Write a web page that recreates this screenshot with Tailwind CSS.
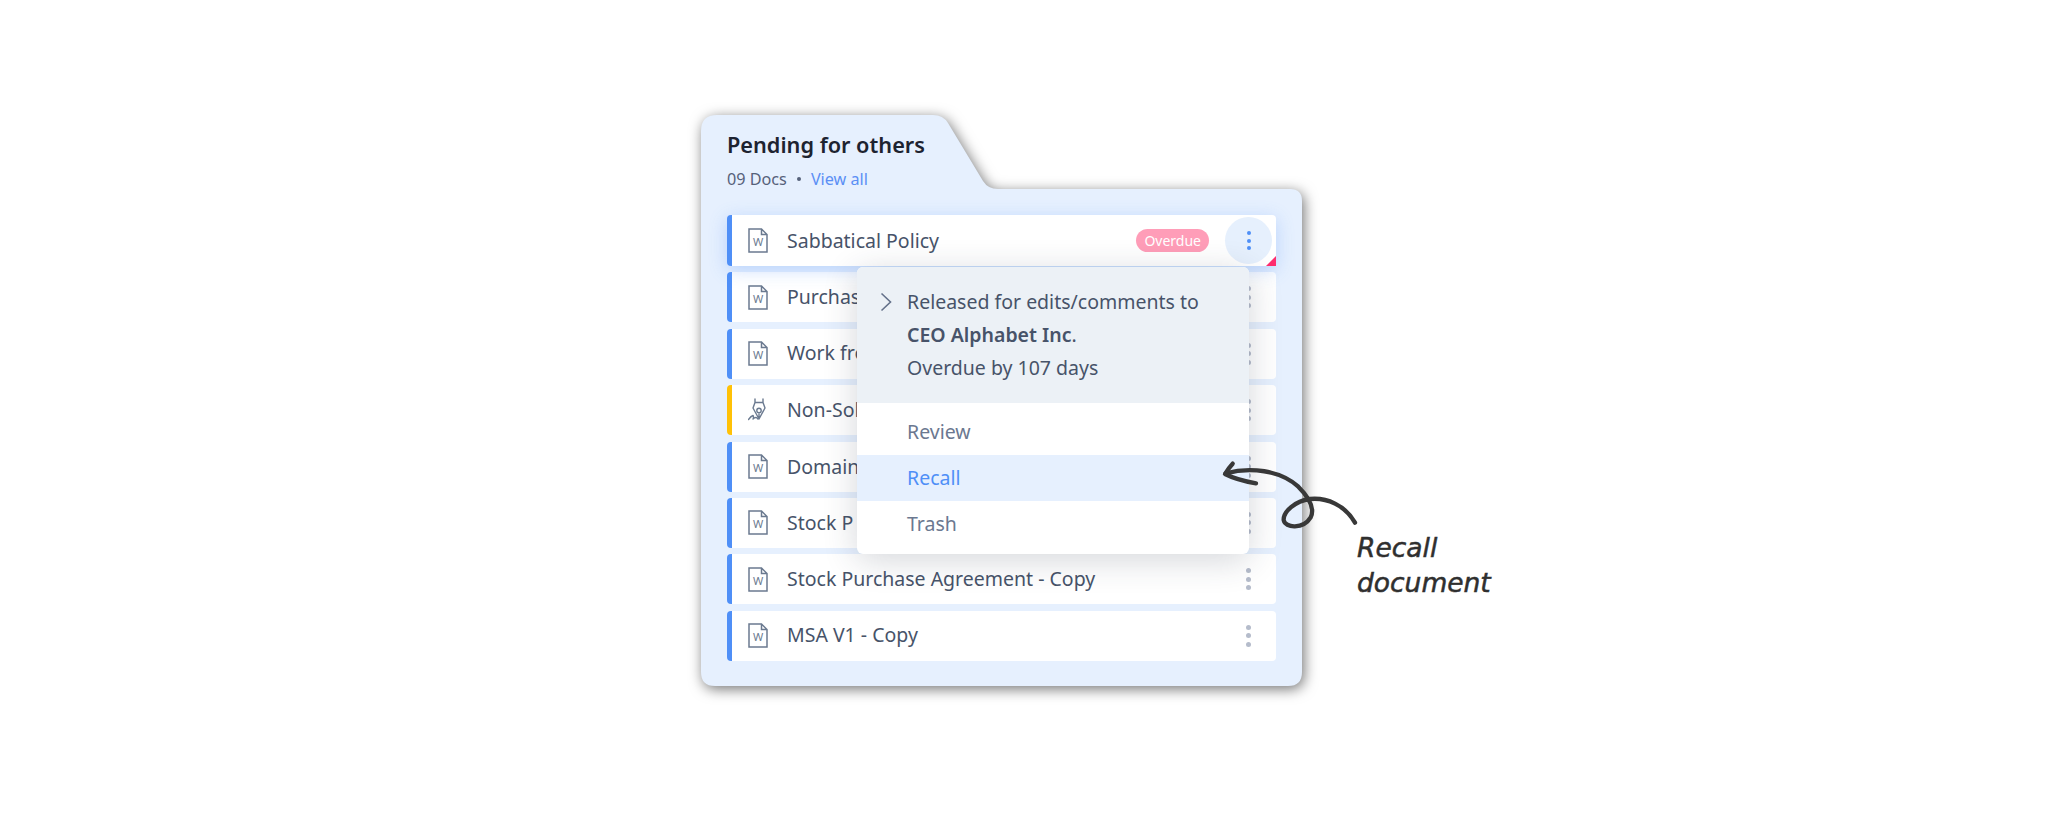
<!DOCTYPE html>
<html lang="en">
<head>
    <meta charset="UTF-8">
    <title>Pending for others</title>
    <script src="https://cdn.jsdelivr.net/npm/@tailwindcss/browser@4"></script>
</head>
<body class="bg-white h-[827px] overflow-hidden pl-[701px] pt-[115px] font-['Noto_Sans',sans-serif] text-[#475369]">

    <!-- folder panel -->
    <div class="relative w-[601px] h-[571px]">
        <svg class="absolute inset-0 overflow-visible drop-shadow-[2px_3px_7px_rgba(0,0,0,0.55)]" width="601" height="571" viewBox="0 0 601 571">
            <path fill="#e6f0fe" d="M16 0 H232 Q242 0 247 8 L282 66 Q287 74 297 74 H589 Q601 74 601 86 V557 Q601 571 587 571 H14 Q0 571 0 557 V16 Q0 0 16 0 Z"/>
        </svg>

        <div class="relative px-[26px] pt-[14px]">
            <h1 class="text-[21.7px] leading-[32px] font-semibold text-[#1d2330]">Pending for others</h1>
            <div class="flex items-center mt-[6px] text-[16.2px] leading-[24px]">
                <span class="text-[#56617a]">09 Docs</span>
                <span class="w-[4px] h-[4px] rounded-full bg-[#56617a] mx-[10px]"></span>
                <a class="text-[#5b8ff5]">View all</a>
            </div>

            <!-- rows -->
            <div class="flex flex-col gap-[6.4px] mt-[24px] w-[549px] text-[19.5px]">
                <div class="relative h-[51px] bg-white rounded-[4px] border-l-[5px] border-[#4f8ff7] flex items-center pl-[16px] shadow-[0_4px_18px_rgba(79,143,247,0.3)]">
                    <svg class="w-[20px] h-[25px] mr-[19px]" viewBox="0 0 20 25"><path fill="none" stroke="#6b7a90" stroke-width="1.5" d="M1 1 H13.5 L19 6.5 V24 H1 Z M13.5 1 V6.5 H19"/><text x="10" y="18" text-anchor="middle" font-size="11" font-family="Noto Sans" fill="#6b7a90">W</text></svg>
                    <span>Sabbatical Policy</span>
                    <span class="ml-auto mr-[16px] px-[8px] h-[23px] leading-[23px] rounded-full bg-[#ff9db8] text-white text-[14px]">Overdue</span>
                    <div class="w-[47px] h-[47px] rounded-full bg-[#e6f0fd] mr-[4px] flex flex-col items-center justify-center gap-[3.5px]">
                        <i class="w-[4px] h-[4px] rounded-full bg-[#4f8ff7]"></i><i class="w-[4px] h-[4px] rounded-full bg-[#4f8ff7]"></i><i class="w-[4px] h-[4px] rounded-full bg-[#4f8ff7]"></i>
                    </div>
                    <svg class="absolute right-0 bottom-0" width="10" height="10" viewBox="0 0 10 10"><path fill="#ff2d6e" d="M10 0 V10 H0 Z"/></svg>
                </div>

                <div class="h-[50px] bg-white rounded-[4px] border-l-[5px] border-[#4f8ff7] flex items-center pl-[16px]">
                    <svg class="w-[20px] h-[25px] mr-[19px]" viewBox="0 0 20 25"><path fill="none" stroke="#6b7a90" stroke-width="1.5" d="M1 1 H13.5 L19 6.5 V24 H1 Z M13.5 1 V6.5 H19"/><text x="10" y="18" text-anchor="middle" font-size="11" font-family="Noto Sans" fill="#6b7a90">W</text></svg>
                    <span class="mb-[2px]">Purchas</span>
                    <div class="ml-auto mr-[25px] flex flex-col gap-[3.5px]"><i class="w-[5px] h-[5px] rounded-full bg-[#b5bccb]"></i><i class="w-[5px] h-[5px] rounded-full bg-[#b5bccb]"></i><i class="w-[5px] h-[5px] rounded-full bg-[#b5bccb]"></i></div>
                </div>

                <div class="h-[50px] bg-white rounded-[4px] border-l-[5px] border-[#4f8ff7] flex items-center pl-[16px]">
                    <svg class="w-[20px] h-[25px] mr-[19px]" viewBox="0 0 20 25"><path fill="none" stroke="#6b7a90" stroke-width="1.5" d="M1 1 H13.5 L19 6.5 V24 H1 Z M13.5 1 V6.5 H19"/><text x="10" y="18" text-anchor="middle" font-size="11" font-family="Noto Sans" fill="#6b7a90">W</text></svg>
                    <span class="mb-[2px]">Work fro</span>
                    <div class="ml-auto mr-[25px] flex flex-col gap-[3.5px]"><i class="w-[5px] h-[5px] rounded-full bg-[#b5bccb]"></i><i class="w-[5px] h-[5px] rounded-full bg-[#b5bccb]"></i><i class="w-[5px] h-[5px] rounded-full bg-[#b5bccb]"></i></div>
                </div>

                <div class="h-[50px] bg-white rounded-[4px] border-l-[5px] border-[#ffc107] flex items-center pl-[16px]">
                    <!-- pen nib with a signature swirl -->
                    <svg class="w-[20px] h-[25px] mr-[19px]" viewBox="0 0 20 25" fill="none" stroke="#6b7a90" stroke-width="1.4" stroke-linejoin="round" stroke-linecap="round"><path d="M7 1 V4.5 H15 V1 M7 4.5 L5 10 L11 21 L17 10 L15 4.5 M11 21 V16"/><circle cx="11" cy="12.5" r="2.2"/><path d="M0.5 21.5 Q3 18 5 17.5 Q6 19 5 21 Q8 18 10 21"/></svg>
                    <span class="mb-[2px]">Non-Sol</span>
                    <div class="ml-auto mr-[25px] flex flex-col gap-[3.5px]"><i class="w-[5px] h-[5px] rounded-full bg-[#b5bccb]"></i><i class="w-[5px] h-[5px] rounded-full bg-[#b5bccb]"></i><i class="w-[5px] h-[5px] rounded-full bg-[#b5bccb]"></i></div>
                </div>

                <div class="h-[50px] bg-white rounded-[4px] border-l-[5px] border-[#4f8ff7] flex items-center pl-[16px]">
                    <svg class="w-[20px] h-[25px] mr-[19px]" viewBox="0 0 20 25"><path fill="none" stroke="#6b7a90" stroke-width="1.5" d="M1 1 H13.5 L19 6.5 V24 H1 Z M13.5 1 V6.5 H19"/><text x="10" y="18" text-anchor="middle" font-size="11" font-family="Noto Sans" fill="#6b7a90">W</text></svg>
                    <span>Domain</span>
                    <div class="ml-auto mr-[25px] flex flex-col gap-[3.5px]"><i class="w-[5px] h-[5px] rounded-full bg-[#b5bccb]"></i><i class="w-[5px] h-[5px] rounded-full bg-[#b5bccb]"></i><i class="w-[5px] h-[5px] rounded-full bg-[#b5bccb]"></i></div>
                </div>

                <div class="h-[50px] bg-white rounded-[4px] border-l-[5px] border-[#4f8ff7] flex items-center pl-[16px]">
                    <svg class="w-[20px] h-[25px] mr-[19px]" viewBox="0 0 20 25"><path fill="none" stroke="#6b7a90" stroke-width="1.5" d="M1 1 H13.5 L19 6.5 V24 H1 Z M13.5 1 V6.5 H19"/><text x="10" y="18" text-anchor="middle" font-size="11" font-family="Noto Sans" fill="#6b7a90">W</text></svg>
                    <span>Stock P</span>
                    <div class="ml-auto mr-[25px] flex flex-col gap-[3.5px]"><i class="w-[5px] h-[5px] rounded-full bg-[#b5bccb]"></i><i class="w-[5px] h-[5px] rounded-full bg-[#b5bccb]"></i><i class="w-[5px] h-[5px] rounded-full bg-[#b5bccb]"></i></div>
                </div>

                <div class="h-[50px] bg-white rounded-[4px] border-l-[5px] border-[#4f8ff7] flex items-center pl-[16px]">
                    <svg class="w-[20px] h-[25px] mr-[19px]" viewBox="0 0 20 25"><path fill="none" stroke="#6b7a90" stroke-width="1.5" d="M1 1 H13.5 L19 6.5 V24 H1 Z M13.5 1 V6.5 H19"/><text x="10" y="18" text-anchor="middle" font-size="11" font-family="Noto Sans" fill="#6b7a90">W</text></svg>
                    <span class="mb-[2px]">Stock Purchase Agreement - Copy</span>
                    <div class="ml-auto mr-[25px] flex flex-col gap-[3.5px]"><i class="w-[5px] h-[5px] rounded-full bg-[#b5bccb]"></i><i class="w-[5px] h-[5px] rounded-full bg-[#b5bccb]"></i><i class="w-[5px] h-[5px] rounded-full bg-[#b5bccb]"></i></div>
                </div>

                <div class="h-[50px] bg-white rounded-[4px] border-l-[5px] border-[#4f8ff7] flex items-center pl-[16px]">
                    <svg class="w-[20px] h-[25px] mr-[19px]" viewBox="0 0 20 25"><path fill="none" stroke="#6b7a90" stroke-width="1.5" d="M1 1 H13.5 L19 6.5 V24 H1 Z M13.5 1 V6.5 H19"/><text x="10" y="18" text-anchor="middle" font-size="11" font-family="Noto Sans" fill="#6b7a90">W</text></svg>
                    <span class="mb-[2px]">MSA V1 - Copy</span>
                    <div class="ml-auto mr-[25px] flex flex-col gap-[3.5px]"><i class="w-[5px] h-[5px] rounded-full bg-[#b5bccb]"></i><i class="w-[5px] h-[5px] rounded-full bg-[#b5bccb]"></i><i class="w-[5px] h-[5px] rounded-full bg-[#b5bccb]"></i></div>
                </div>
            </div>
        </div>

        <!-- context menu -->
        <div class="absolute left-[156px] top-[152px] w-[392px] h-[287px] bg-white rounded-[6px] overflow-hidden shadow-[0_6px_34px_rgba(40,50,70,0.2)] text-[19.5px]">
            <div class="h-[136px] bg-[#ecf1f6] flex pt-[18px] pl-[23px]">
                <svg class="w-[12px] h-[20px] mt-[7px] mr-[15px] shrink-0" viewBox="0 0 12 20" fill="none" stroke="#64718a" stroke-width="1.6"><path d="M1.5 1.5 L10.5 10 L1.5 18.5"/></svg>
                <div class="leading-[33px]">
                    <p>Released for edits/comments to</p>
                    <p><b class="font-semibold">CEO Alphabet Inc</b>.</p>
                    <p>Overdue by 107 days</p>
                </div>
            </div>
            <div class="h-[52px] pl-[50px] pt-[5px] flex items-center text-[#6b7890]">Review</div>
            <div class="h-[46px] pl-[50px] flex items-center bg-[#e6f0fe] text-[#4f8ff7]">Recall</div>
            <div class="h-[46px] pl-[50px] flex items-center text-[#6b7890]">Trash</div>
        </div>
    </div>

    <!-- hand drawn annotation -->
    <svg class="absolute left-[1180px] top-[440px]" width="340" height="180" viewBox="0 0 1020 540" fill="none" stroke="#383838" stroke-width="13" stroke-linecap="round" stroke-linejoin="round">
        <path d="M525 248 C495 195 440 172 390 177 C345 183 310 215 311 240 C315 265 370 268 392 232 C405 205 385 170 355 140 C300 90 210 80 137 100"/>
        <path d="M158 71 Q145 85 135 102 Q170 120 228 130"/>
    </svg>
    <div class="absolute left-[1357px] top-[530px] text-[26.5px] leading-[35px] italic text-[#2f2f2f] font-['DejaVu_Sans',sans-serif] [-webkit-text-stroke:0.5px_#2f2f2f]">Recall<br>document</div>

</body>
</html>
